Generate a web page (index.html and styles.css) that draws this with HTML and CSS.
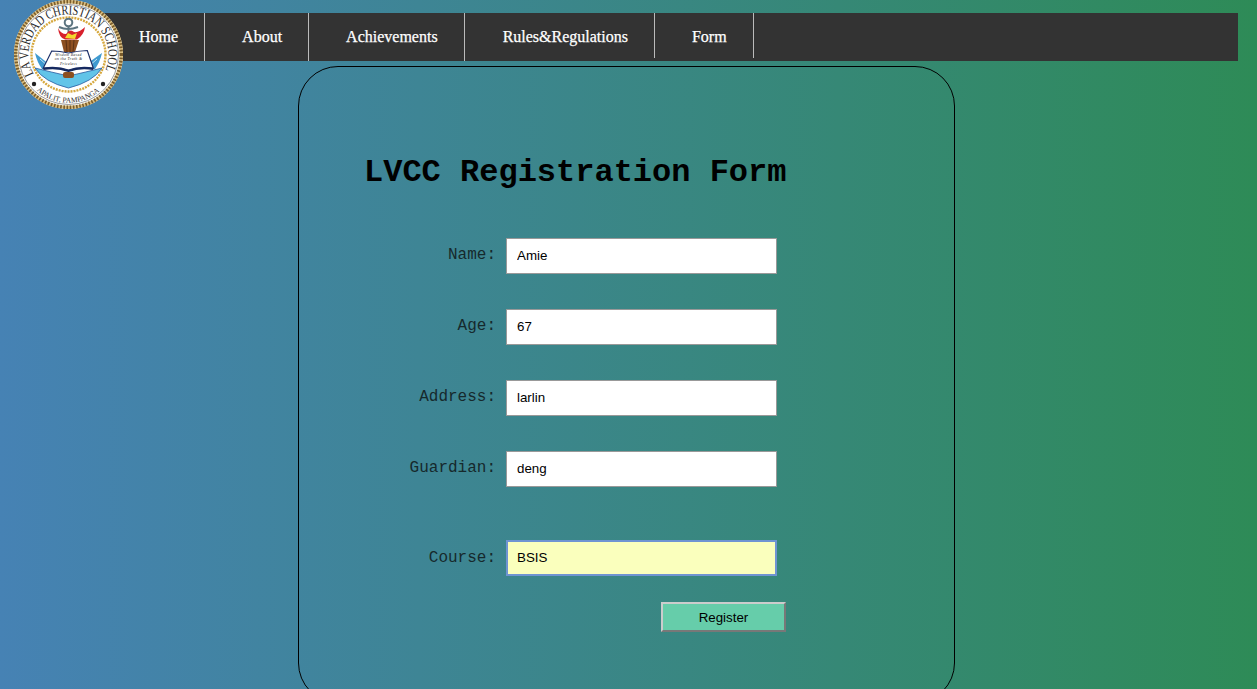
FILE: index.html
```html
<!DOCTYPE html>
<html lang="en">
<head>
<meta charset="utf-8">
<title>LVCC Registration Form</title>
<link rel="stylesheet" href="styles.css">
</head>
<body>
<header class="site-header">
  <svg class="logo" viewBox="0 0 111 110" aria-label="La Verdad Christian School seal">
    <defs>
      <path id="arc-top" d="M20.7 74.200 A40 40 0 1 1 92.300 70.100"/>
      <path id="arc-bottom" d="M23.500 90.500 A48 48 0 0 0 87.500 90.500"/>
    </defs>
    <circle class="seal-disc" cx="55.500" cy="54.500" r="54.500"/>
    <circle class="seal-rope" cx="55.500" cy="54.500" r="52.800"/>
    <circle class="seal-rope-dark" cx="55.500" cy="54.500" r="52.800"/>
    <circle class="seal-line" cx="55.500" cy="54.500" r="50"/>
    <circle class="seal-rope-thin" cx="55.500" cy="54.500" r="37"/>
    <text class="seal-text-top"><textPath href="#arc-top" textLength="162" lengthAdjust="spacingAndGlyphs">LA VERDAD CHRISTIAN SCHOOL</textPath></text>
    <text class="seal-text-bottom"><textPath href="#arc-bottom" textLength="69" lengthAdjust="spacingAndGlyphs">APALIT, PAMPANGA</textPath></text>
    <circle class="seal-dot" cx="21" cy="84" r="2.200"/>
    <circle class="seal-dot" cx="90" cy="84" r="2.200"/>
    <path class="bowl" d="M22 68 Q38 72 55.500 76 Q73 72 89 68 Q80 82 55.500 88 Q31 82 22 68 Z"/>
    <path class="sea" d="M22 53 L37 65 L39 69 L29 69 Q24 62 22 53 Z"/>
    <path class="sea" d="M89 53 L75 63 L73 69 L82 69 Q87 62 89 53 Z"/>
    <path class="sea-streak" d="M27 59 L36 67 M84 59 L75 67"/>
    <circle class="anchor" cx="55.500" cy="22.500" r="3.800"/>
    <path class="anchor-bar" d="M55.500 26.500 V34 M46 27 Q55 31 65 27"/>
    <path class="flame" d="M45 28 Q46 38 52 39.500 L64 39.500 Q71 35 72 27 Q66 33 61 32 Q57 28 53 34 Q48 34 45 28 Z"/>
    <path class="flame-core" d="M52 38 L55 33 L59 35 L64 33 L62 39 Z"/>
    <path class="torch" d="M48 40 H66 L62 52 H51 Z"/>
    <path class="torch-lines" d="M53 40 L54 52 M57 40 V52 M61 40 L60 52"/>
    <path class="book" d="M38.700 51 Q47 51 55.500 53 Q64 51 74.300 50.500 L80.300 68 Q66 66 55.500 70 Q45 66 30.300 68 Z"/>
    <path class="book-edge" d="M30.300 69 Q45 67 55.500 71 Q66 67 80.300 69"/>
    <text class="book-text"><tspan x="55.500" y="55.500">Wisdom Based</tspan><tspan x="55.500" y="60">on the Truth &amp;</tspan><tspan x="55.500" y="64.500">Priceless</tspan></text>
    <rect class="torch" x="50" y="72" width="11" height="6" rx="2"/>
  </svg>
  <nav class="main-nav">
    <a class="nav-link" href="#">Home</a>
    <a class="nav-link" href="#">About</a>
    <a class="nav-link" href="#">Achievements</a>
    <a class="nav-link short rules" href="#">Rules&amp;Regulations</a>
    <a class="nav-link short" href="#">Form</a>
  </nav>
</header>
<main class="card">
  <h1 class="title">LVCC Registration Form</h1>
  <form class="form">
    <div class="row"><label class="label" for="name">Name:</label><input class="field" id="name" value="Amie"></div>
    <div class="row"><label class="label" for="age">Age:</label><input class="field" id="age" value="67"></div>
    <div class="row"><label class="label" for="address">Address:</label><input class="field" id="address" value="larlin"></div>
    <div class="row"><label class="label" for="guardian">Guardian:</label><input class="field" id="guardian" value="deng"></div>
    <div class="row row-course"><label class="label" for="course">Course:</label><input class="field field-active" id="course" value="BSIS"></div>
    <div class="actions"><button class="register" type="button">Register</button></div>
  </form>
</main>
</body>
</html>
```
FILE: styles.css
```css
html, body {
  margin: 0;
  height: 100%;
  overflow: hidden;
}
body {
  background: linear-gradient(to right, #4682b4, #2e8b57);
  font-family: "Liberation Serif", serif;
}
.site-header {
  position: relative;
  padding: 13px 19px 0 60px;
}
.logo {
  position: absolute;
  left: 13px;
  top: 0;
  width: 111px;
  height: 110px;
  z-index: 2;
}
.seal-disc { fill: #fff; }
.seal-rope { fill: none; stroke: #d9bd7d; stroke-width: 3.400; }
.seal-rope-dark { fill: none; stroke: #7a5c2c; stroke-width: 3.400; stroke-dasharray: 1.600 1.600; }
.seal-line { fill: none; stroke: #333; stroke-width: .5; }
.seal-rope-thin { fill: none; stroke: #d6a83e; stroke-width: 2.400; stroke-dasharray: 2 1; }
.seal-text-top {
  font: 13.500px "Liberation Serif", serif;
  fill: #2a2a2a;
}
.seal-text-bottom {
  font: 7.500px "Liberation Serif", serif;
  fill: #2a2a2a;
}
.seal-dot { fill: #222; }
.sea { fill: #3f9ad0; }
.sea-streak { fill: none; stroke: #fff; stroke-width: .7; }
.bowl { fill: #62c4e8; stroke: #2a5aa0; stroke-width: .8; }
.anchor { fill: none; stroke: #5c7480; stroke-width: 2; }
.anchor-bar { fill: none; stroke: #5c7480; stroke-width: 2; }
.flame { fill: #d8202c; }
.flame-core { fill: #f3d72e; }
.torch { fill: #8c4f20; }
.torch-lines { fill: none; stroke: #4e2a10; stroke-width: .8; }
.book { fill: #fff; stroke: #1c2f68; stroke-width: 1.200; }
.book-edge { fill: none; stroke: #14285e; stroke-width: 2; }
.book-text {
  font: italic 3.800px "Liberation Serif", serif;
  letter-spacing: .35px;
  text-anchor: middle;
  fill: #222;
}
.main-nav {
  display: flex;
  height: 48px;
  padding-left: 42px;
  background: #333;
}
.nav-link {
  box-sizing: border-box;
  height: 48px;
  padding: 15px 26px 0 37px;
  border-right: 1px solid #bbb;
  color: #fff;
  font-size: 16px;
  line-height: 18px;
  text-decoration: none;
  -webkit-text-stroke: .25px #fff;
}
.nav-link.short {
  height: 45px;
}
.nav-link.rules {
  padding-left: 38px;
}
.card {
  box-sizing: border-box;
  width: 657px;
  height: 637px;
  margin: 5px 0 0 298px;
  padding: 88px 0 0 65px;
  border: 1px solid #000;
  border-radius: 40px;
}
.title {
  margin: 0;
  font: bold 32px/36px "Liberation Mono", monospace;
  color: #000;
}
.form {
  display: flex;
  flex-direction: column;
  gap: 35px;
  margin-top: 47px;
}
.row {
  display: flex;
  align-items: center;
  gap: 10px;
}
.row-course {
  margin-top: 19px;
}
.label {
  width: 132px;
  text-align: right;
  font: 16px "Liberation Mono", monospace;
  color: #16292c;
  position: relative;
  top: -1px;
}
.field {
  box-sizing: border-box;
  width: 271px;
  height: 36px;
  padding: 0 10px 2px;
  border: 1px solid #999;
  background: #fff;
  color: #000;
  font: 13.333px "Liberation Sans", sans-serif;
  outline: none;
}
.field-active {
  background: #faffbd;
  border: 2px solid #6f94d2;
  padding: 0 9px 2px;
  margin-top: -1px;
  margin-bottom: 1px;
}
.actions {
  display: flex;
  margin-top: -10px;
  padding-left: 297px;
}
.register {
  box-sizing: border-box;
  width: 125px;
  height: 30px;
  padding: 0;
  border: 2px outset #ccc;
  background: #66cdaa;
  color: #000;
  font: 13.333px "Liberation Sans", sans-serif;
}
```
